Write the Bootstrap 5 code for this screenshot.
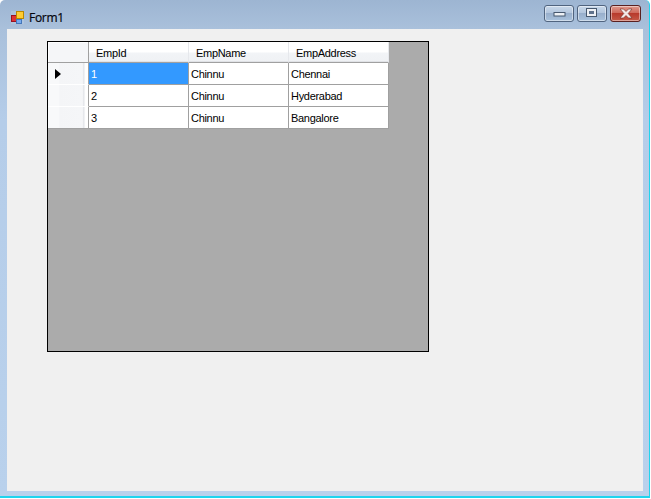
<!DOCTYPE html>
<html lang="en">
<head>
<meta charset="utf-8">
<title>Form1</title>
<link href="https://cdn.jsdelivr.net/npm/bootstrap@5.3.0/dist/css/bootstrap.min.css" rel="stylesheet">
<style>
html,body{margin:0;height:499px;overflow:hidden;background:#fff}
.win-frame{width:650px;height:498px;background:linear-gradient(180deg,#9db5d2 0,#a9c0db 28px,#b5cde9 120px,#b9d1ec 498px);border-bottom:2px solid #1fd4ee;border-right:1px solid #1fd4ee;padding:0 6px 5px 7px;display:flex;flex-direction:column;border-top-left-radius:5px;border-top-right-radius:5px}
.win-title{height:29px;flex:none;padding:0 0 0 4px}
.win-left{padding-top:5px}
.win-ico{background:rgba(255,255,255,.12)}
.win-name{font-family:"Open Sans",sans-serif;font-size:12px;letter-spacing:-.3px;color:#04040c;margin-left:5px;margin-top:1px;-webkit-text-stroke:.2px #04040c}
.win-btns{gap:3px;margin-right:2px;margin-top:-3px}
.win-btn{height:17px;width:30px;border:1px solid #50647f;border-radius:3px;background:linear-gradient(180deg,#c8d8ea 0,#b3c6dd 45%,#98afcc 50%,#a9c2dc 100%);box-shadow:inset 0 0 0 1px rgba(255,255,255,.45)}
.win-btn.win-close{width:31px;border-color:#5a2020;background:linear-gradient(180deg,#e0988c 0,#cf6a5c 45%,#b83a2c 50%,#c55a48 100%)}
.win-client{flex:1;background:#f0f0f0;padding:12px 0 0 40px}
.dgv{width:382px;height:311px;background:#ababab;border:1px solid #000}
.dgv-table{border-collapse:separate;border-spacing:0;table-layout:fixed;width:341px;font-family:"Liberation Sans",sans-serif;font-size:11px;letter-spacing:-.3px;color:#000;background:#fff}
.dgv-table th,.dgv-table td{padding:0;font-weight:400;vertical-align:middle;line-height:14px;border:0}
.dgv-table th{height:21px;padding:2px 0 0 7px;box-sizing:border-box;background:linear-gradient(180deg,#fff 0,#fff 50%,#f2f4f7 55%,#eff1f4 100%);border-right:1px solid #e6e8ec;border-bottom:1px solid #a0a0a0;box-shadow:inset 0 -1px 0 #e0e2e6}
.dgv-table th.dgv-corner{padding:0;width:41px;background:#f5f6f8;border-right:1px solid #a0a0a0;box-shadow:inset 1px 1px 0 #fff}
.dgv-table td{height:22px;padding-left:2px;background:#fff;border-right:1px solid #a0a0a0;border-bottom:1px solid #a0a0a0;box-sizing:border-box}
.dgv-table td.dgv-sel{background:#3399ff;color:#fff}
.dgv-table td.dgv-rowhead{padding:0;background:linear-gradient(90deg,#f8f9fa 0,#f8f9fa 28%,#f4f5f7 29%,#f5f6f8 86%,#e4e6ea 89%,#fff 94%);border-right:1px solid #a0a0a0;border-bottom:1px solid #fff}
.dgv-table tbody tr:last-child td{border-bottom-color:#a0a0a0}
.dgv-arrow{display:block;width:0;height:0;margin-left:7px;border-left:6px solid #000;border-top:5px solid transparent;border-bottom:5px solid transparent}
.col-a{width:100px}
</style>
</head>
<body>
<div class="win-frame">
  <div class="win-title d-flex align-items-center">
    <div class="win-left d-flex align-items-center">
    <svg class="win-ico" width="13" height="13" viewBox="0 0 13 13">
      <rect x="0.5" y="4.500" width="5" height="6" fill="#d33" stroke="#912"/>
      <rect x="5.500" y="0.500" width="7" height="7" fill="#fc3" stroke="#b80"/>
      <rect x="5.500" y="8.500" width="5" height="4" fill="#7ae" stroke="#47b"/>
    </svg>
    <span class="win-name">Form1</span>
    </div>
    <div class="win-btns ms-auto d-flex">
      <div class="win-btn d-flex align-items-center justify-content-center"><svg width="13" height="7" viewBox="0 0 13 7"><rect x="1" y="2.500" width="11" height="3.500" fill="#eef1f5" stroke="#47586e" stroke-width="1"/></svg></div>
      <div class="win-btn d-flex align-items-center justify-content-center"><svg width="12" height="10" viewBox="0 0 12 10"><rect x="0.5" y="0.500" width="10" height="8" fill="#eef1f5" stroke="#47586e"/><rect x="3" y="3" width="5" height="3" fill="#5f728c"/></svg></div>
      <div class="win-btn win-close d-flex align-items-center justify-content-center"><svg width="14" height="11" viewBox="0 0 14 11"><path d="M1 1h3.500l2.500 2.500 2.500-2.500h3.500l-3.800 4.500 3.800 4.500h-3.500l-2.500-2.500-2.500 2.500H1l3.800-4.500z" fill="#f3e9e6" stroke="#6e2a20" stroke-width=".6"/></svg></div>
    </div>
  </div>
  <div class="win-client">
    <div class="dgv">
      <table class="dgv-table">
        <thead>
          <tr><th class="dgv-corner"></th><th class="col-a">EmpId</th><th class="col-a">EmpName</th><th class="col-a">EmpAddress</th></tr>
        </thead>
        <tbody>
          <tr><td class="dgv-rowhead"><span class="dgv-arrow"></span></td><td class="dgv-sel">1</td><td>Chinnu</td><td>Chennai</td></tr>
          <tr><td class="dgv-rowhead"></td><td>2</td><td>Chinnu</td><td>Hyderabad</td></tr>
          <tr><td class="dgv-rowhead"></td><td>3</td><td>Chinnu</td><td>Bangalore</td></tr>
        </tbody>
      </table>
    </div>
  </div>
</div>
<script src="https://cdn.jsdelivr.net/npm/bootstrap@5.3.0/dist/js/bootstrap.bundle.min.js"></script>
</body>
</html>
